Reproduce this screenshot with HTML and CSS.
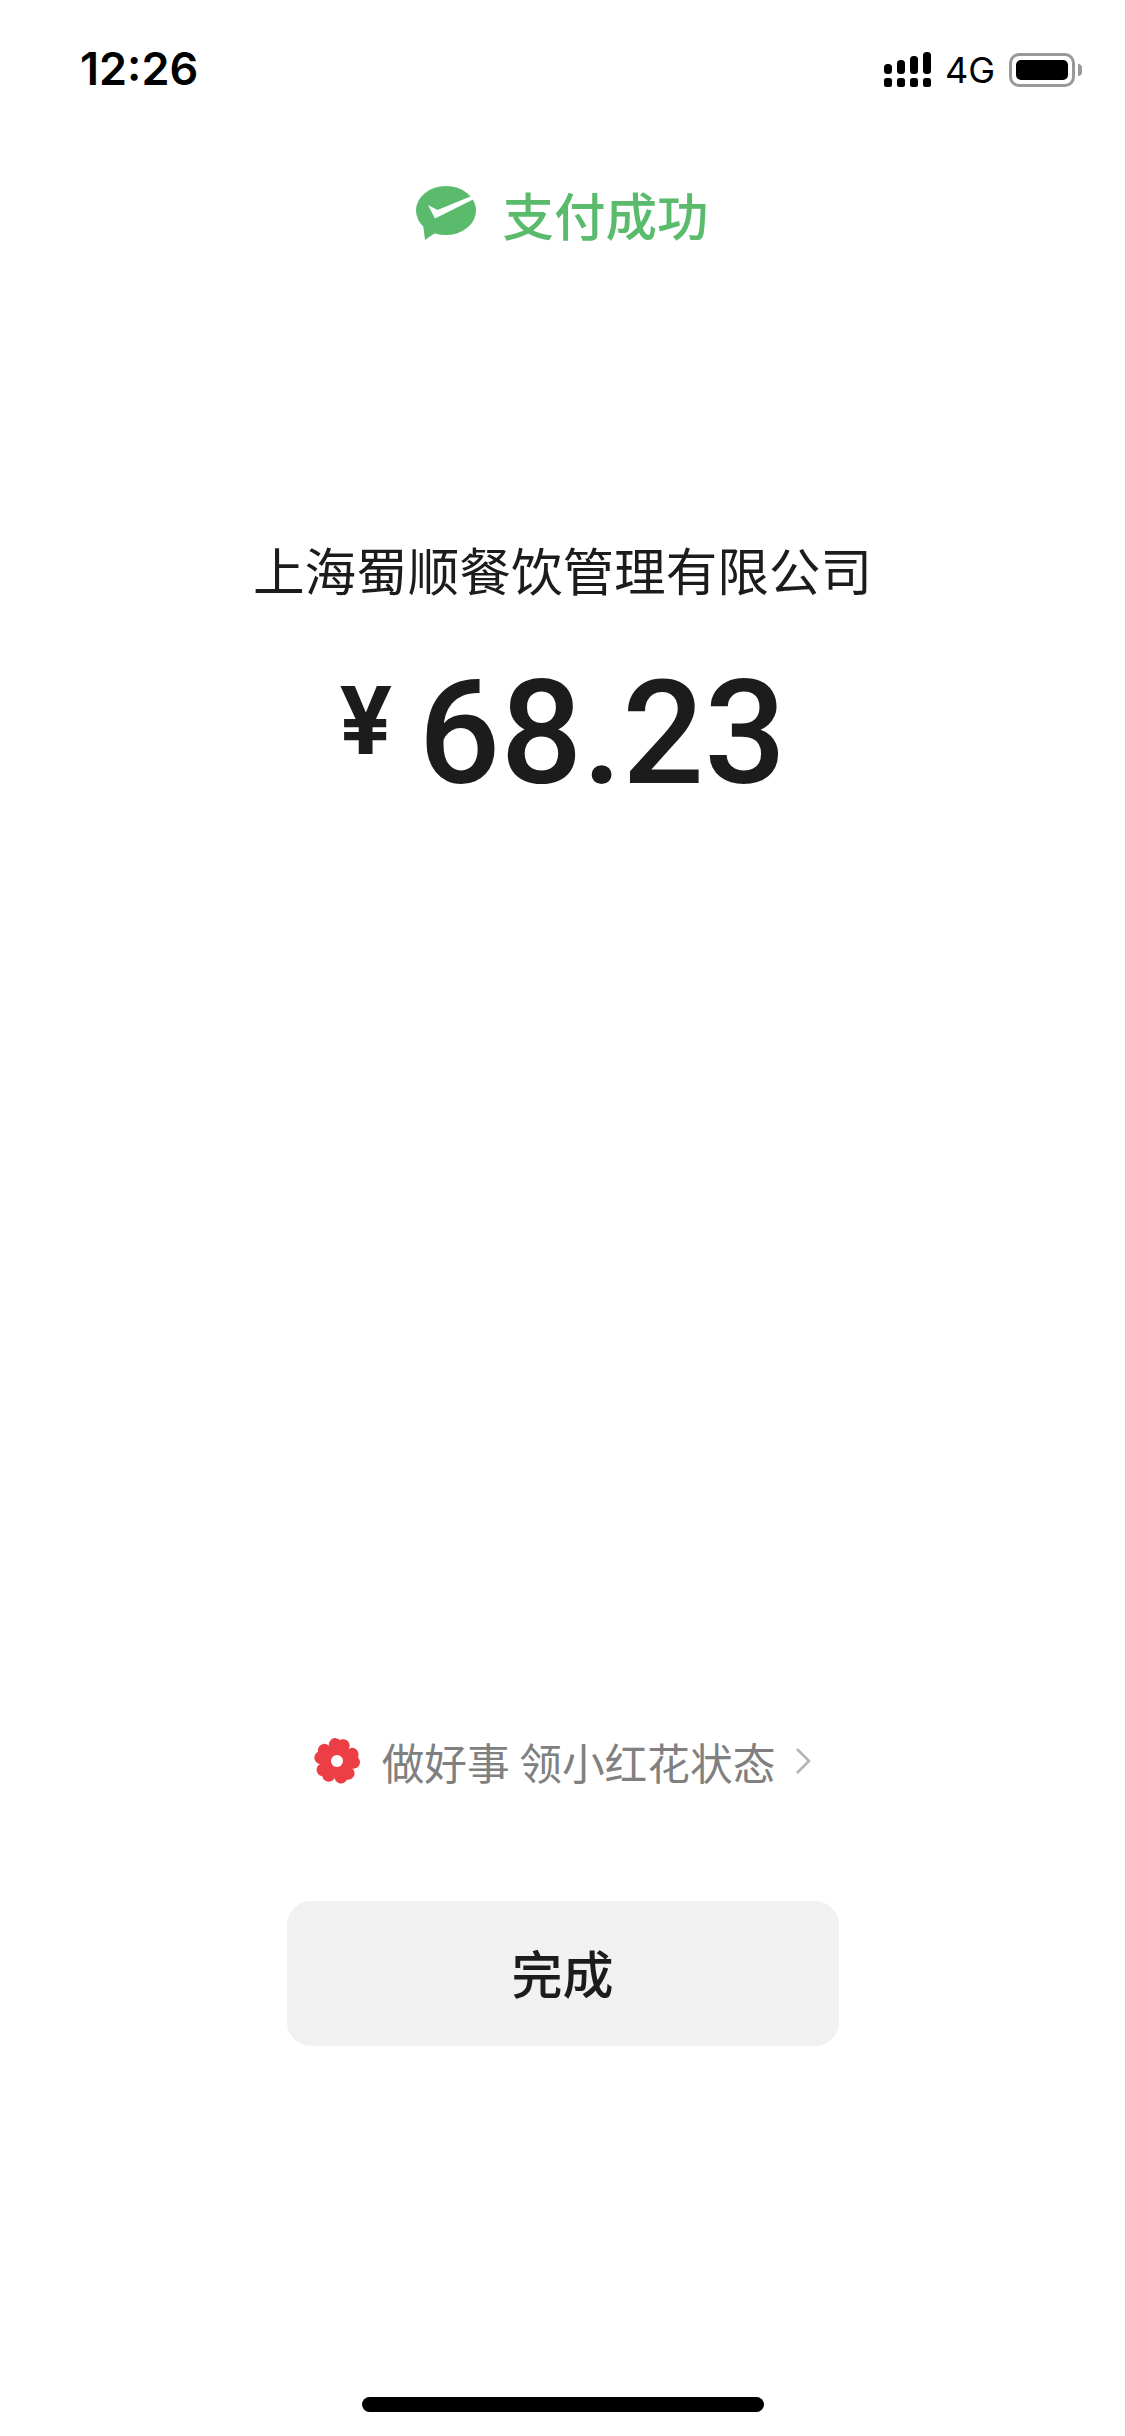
FILE: index.html
```html
<!DOCTYPE html>
<html lang="zh-CN">
<head>
    <meta charset="UTF-8">
    <meta name="viewport" content="width=device-width, initial-scale=1.0">
    <title>支付成功</title>
    <link rel="stylesheet" href="styles.css">
</head>
<body>
    <div class="page">
        <header class="status-bar">
            <span class="time">12:26</span>
            <div class="status-icons">
                <svg class="signal" width="48" height="36" viewBox="0 0 48 36" fill="#000">
                    <rect x="0" y="12" width="8" height="10" rx="3.5"/>
                    <rect x="13" y="8" width="8" height="14" rx="3.5"/>
                    <rect x="26" y="4" width="8" height="18" rx="3.5"/>
                    <rect x="39" y="0" width="8" height="22" rx="3.5"/>
                    <rect x="0" y="26" width="8" height="9" rx="2.5"/>
                    <rect x="13" y="26" width="8" height="9" rx="2.5"/>
                    <rect x="26" y="26" width="8" height="9" rx="2.5"/>
                    <rect x="39" y="26" width="8" height="9" rx="2.5"/>
                </svg>
                <span class="network">4G</span>
                <div class="battery">
                    <div class="battery-body"><div class="battery-level"></div></div>
                    <div class="battery-nub"></div>
                </div>
            </div>
        </header>

        <div class="result-title">
            <svg class="wepay-icon" width="60" height="54" viewBox="0 0 60 54">
                <ellipse cx="30" cy="24.500" rx="30" ry="24.500" fill="#5abb6d"/>
                <path fill="#5abb6d" d="M7 38l2 16 13-9z"/>
                <path fill="#fff" d="M12 19l9.500 5L55.500 10l1.500 3.500L19 32.500z"/>
            </svg>
            <span>支付成功</span>
        </div>

        <div class="merchant">上海蜀顺餐饮管理有限公司</div>
        <div class="amount">
            <span class="currency">¥</span>
            <span class="value">68.23</span>
        </div>

        <div class="spacer"></div>

        <div class="promo">
            <svg class="flower" width="46" height="48" viewBox="-23 -24 46 48">
                <defs>
                    <g id="petal">
                        <circle cx="-4" cy="-16" r="6.500"/>
                        <circle cx="4" cy="-16" r="6.500"/>
                        <path d="M-9.500-14L0 0 9.500-14z"/>
                    </g>
                </defs>
                <g fill="#ec3f45">
                    <use href="#petal" transform="rotate(8)"/>
                    <use href="#petal" transform="rotate(80)"/>
                    <use href="#petal" transform="rotate(152)"/>
                    <use href="#petal" transform="rotate(224)"/>
                    <use href="#petal" transform="rotate(296)"/>
                    <circle cx="0" cy="0" r="14"/>
                </g>
                <circle cx="0" cy="0" r="6" fill="#fff"/>
            </svg>
            <span class="promo-text">做好事 领小红花状态</span>
            <svg class="chevron" width="16" height="28" viewBox="0 0 16 28" fill="none">
                <path d="M2 2l12 12L2 26" stroke="#b4b4b4" stroke-width="2.600"/>
            </svg>
        </div>

        <button class="done-button">完成</button>

        <div class="home-indicator"></div>
    </div>
</body>
</html>
```

FILE: styles.css
```css
html, body {
    margin: 0;
    padding: 0;
    background-color: #fff;
}
.page {
    width: 1125px;
    height: 2436px;
    display: flex;
    flex-direction: column;
    align-items: center;
    overflow: hidden;
    font-family: "Noto Sans CJK SC", "Inter", sans-serif;
    color: #1c1c1c;
}
.status-bar {
    width: 100%;
    box-sizing: border-box;
    height: 136px;
    padding: 38px 43px 0 80px;
    display: flex;
    justify-content: space-between;
    align-items: flex-start;
}
.time {
    font-family: "Inter", sans-serif;
    font-size: 45px;
    font-weight: 600;
    line-height: 62px;
    color: #000;
}
.status-icons {
    display: flex;
    align-items: center;
    height: 36px;
    margin-top: 14px;
}
.signal {
    margin-right: 13px;
}
.network {
    font-family: "Inter", sans-serif;
    font-size: 36px;
    line-height: 36px;
    color: #000;
    margin-right: 14px;
}
.battery {
    display: flex;
    align-items: center;
}
.battery-body {
    width: 66px;
    height: 34px;
    box-sizing: border-box;
    border: 3px solid #999;
    border-radius: 10px;
    padding: 4px;
}
.battery-level {
    height: 100%;
    background-color: #000;
    border-radius: 5px;
}
.battery-nub {
    width: 4px;
    height: 12px;
    margin-left: 3px;
    background-color: #999;
    border-radius: 0 4px 4px 0;
}
.result-title {
    display: flex;
    align-items: center;
    gap: 26px;
    height: 80px;
    margin-top: 37px;
    font-size: 51.5px;
    font-weight: 500;
    color: #5abb6d;
}
.merchant {
    margin-top: 281px;
    font-size: 51.6px;
    line-height: 70px;
    font-weight: 400;
    text-align: center;
}
.amount {
    display: flex;
    align-items: flex-start;
    height: 180px;
    margin-top: 40px;
}
.currency {
    font-family: "Inter", sans-serif;
    font-size: 94px;
    font-weight: 700;
    line-height: 112px;
    margin-top: 20px;
    margin-right: 26px;
}
.value {
    font-family: "Roboto", sans-serif;
    font-size: 144px;
    font-weight: 500;
    line-height: 180px;
}
.spacer {
    flex: 1;
}
.promo {
    display: flex;
    align-items: center;
    height: 60px;
}
.promo-text {
    margin: 0 20px 0 22px;
    font-size: 42.7px;
    color: #808080;
}
.done-button {
    display: block;
    width: 552px;
    height: 145px;
    margin-top: 110px;
    padding: 0 0 4px;
    border: none;
    border-radius: 24px;
    background-color: #f1f1f1;
    color: #1c1c1c;
    font-family: "Noto Sans CJK SC", sans-serif;
    font-size: 51px;
    font-weight: 500;
}
.home-indicator {
    width: 402px;
    height: 15px;
    margin-top: 351px;
    margin-bottom: 24px;
    background-color: #000;
    border-radius: 8px;
}
```
